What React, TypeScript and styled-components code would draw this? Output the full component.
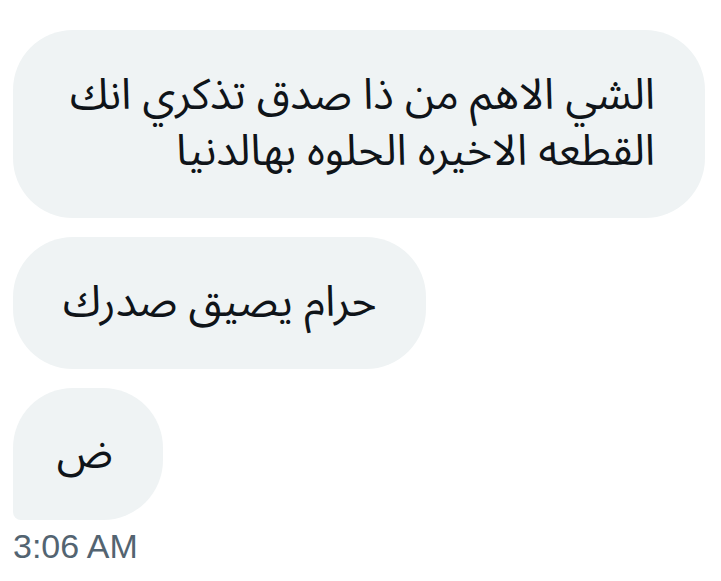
import React from "react";
import styled, { createGlobalStyle } from "styled-components";

const Global = createGlobalStyle`
  html, body {
    margin: 0;
    padding: 0;
    background: #ffffff;
  }
  body {
    width: 721px;
    height: 581px;
    overflow: hidden;
  }
`;

const Thread = styled.div`
  display: flex;
  flex-direction: column;
  align-items: flex-start;
  gap: 19px;
  padding: 30px 0 0 13px;
`;

const Bubble = styled.div<{ $tail?: boolean; $width?: number }>`
  box-sizing: border-box;
  background: #eff3f4;
  color: #0f1419;
  direction: rtl;
  text-align: right;
  white-space: pre-line;
  font-family: "Noto Sans Arabic", "DejaVu Sans", sans-serif;
  font-size: 43px;
  line-height: 56px;
  padding: 38px 50px;
  border-radius: ${(p) => (p.$tail ? "60px 60px 60px 8px" : "60px")};
  ${(p) => (p.$width ? `width: ${p.$width}px;` : "")}
`;

const Stamp = styled.div`
  margin-top: -13px;
  font-family: "Liberation Sans", Arial, sans-serif;
  font-size: 34px;
  line-height: 40px;
  color: #536471;
`;

export default function App() {
  return (
    <>
      <Global />
      <Thread>
        <Bubble $width={692}>
          {"الشي الاهم من ذا صدق تذكري انك\nالقطعه الاخيره الحلوه بهالدنيا"}
        </Bubble>
        <Bubble>حرام يصيق صدرك</Bubble>
        <Bubble $tail $width={150}>ض</Bubble>
        <Stamp>3:06 AM</Stamp>
      </Thread>
    </>
  );
}
